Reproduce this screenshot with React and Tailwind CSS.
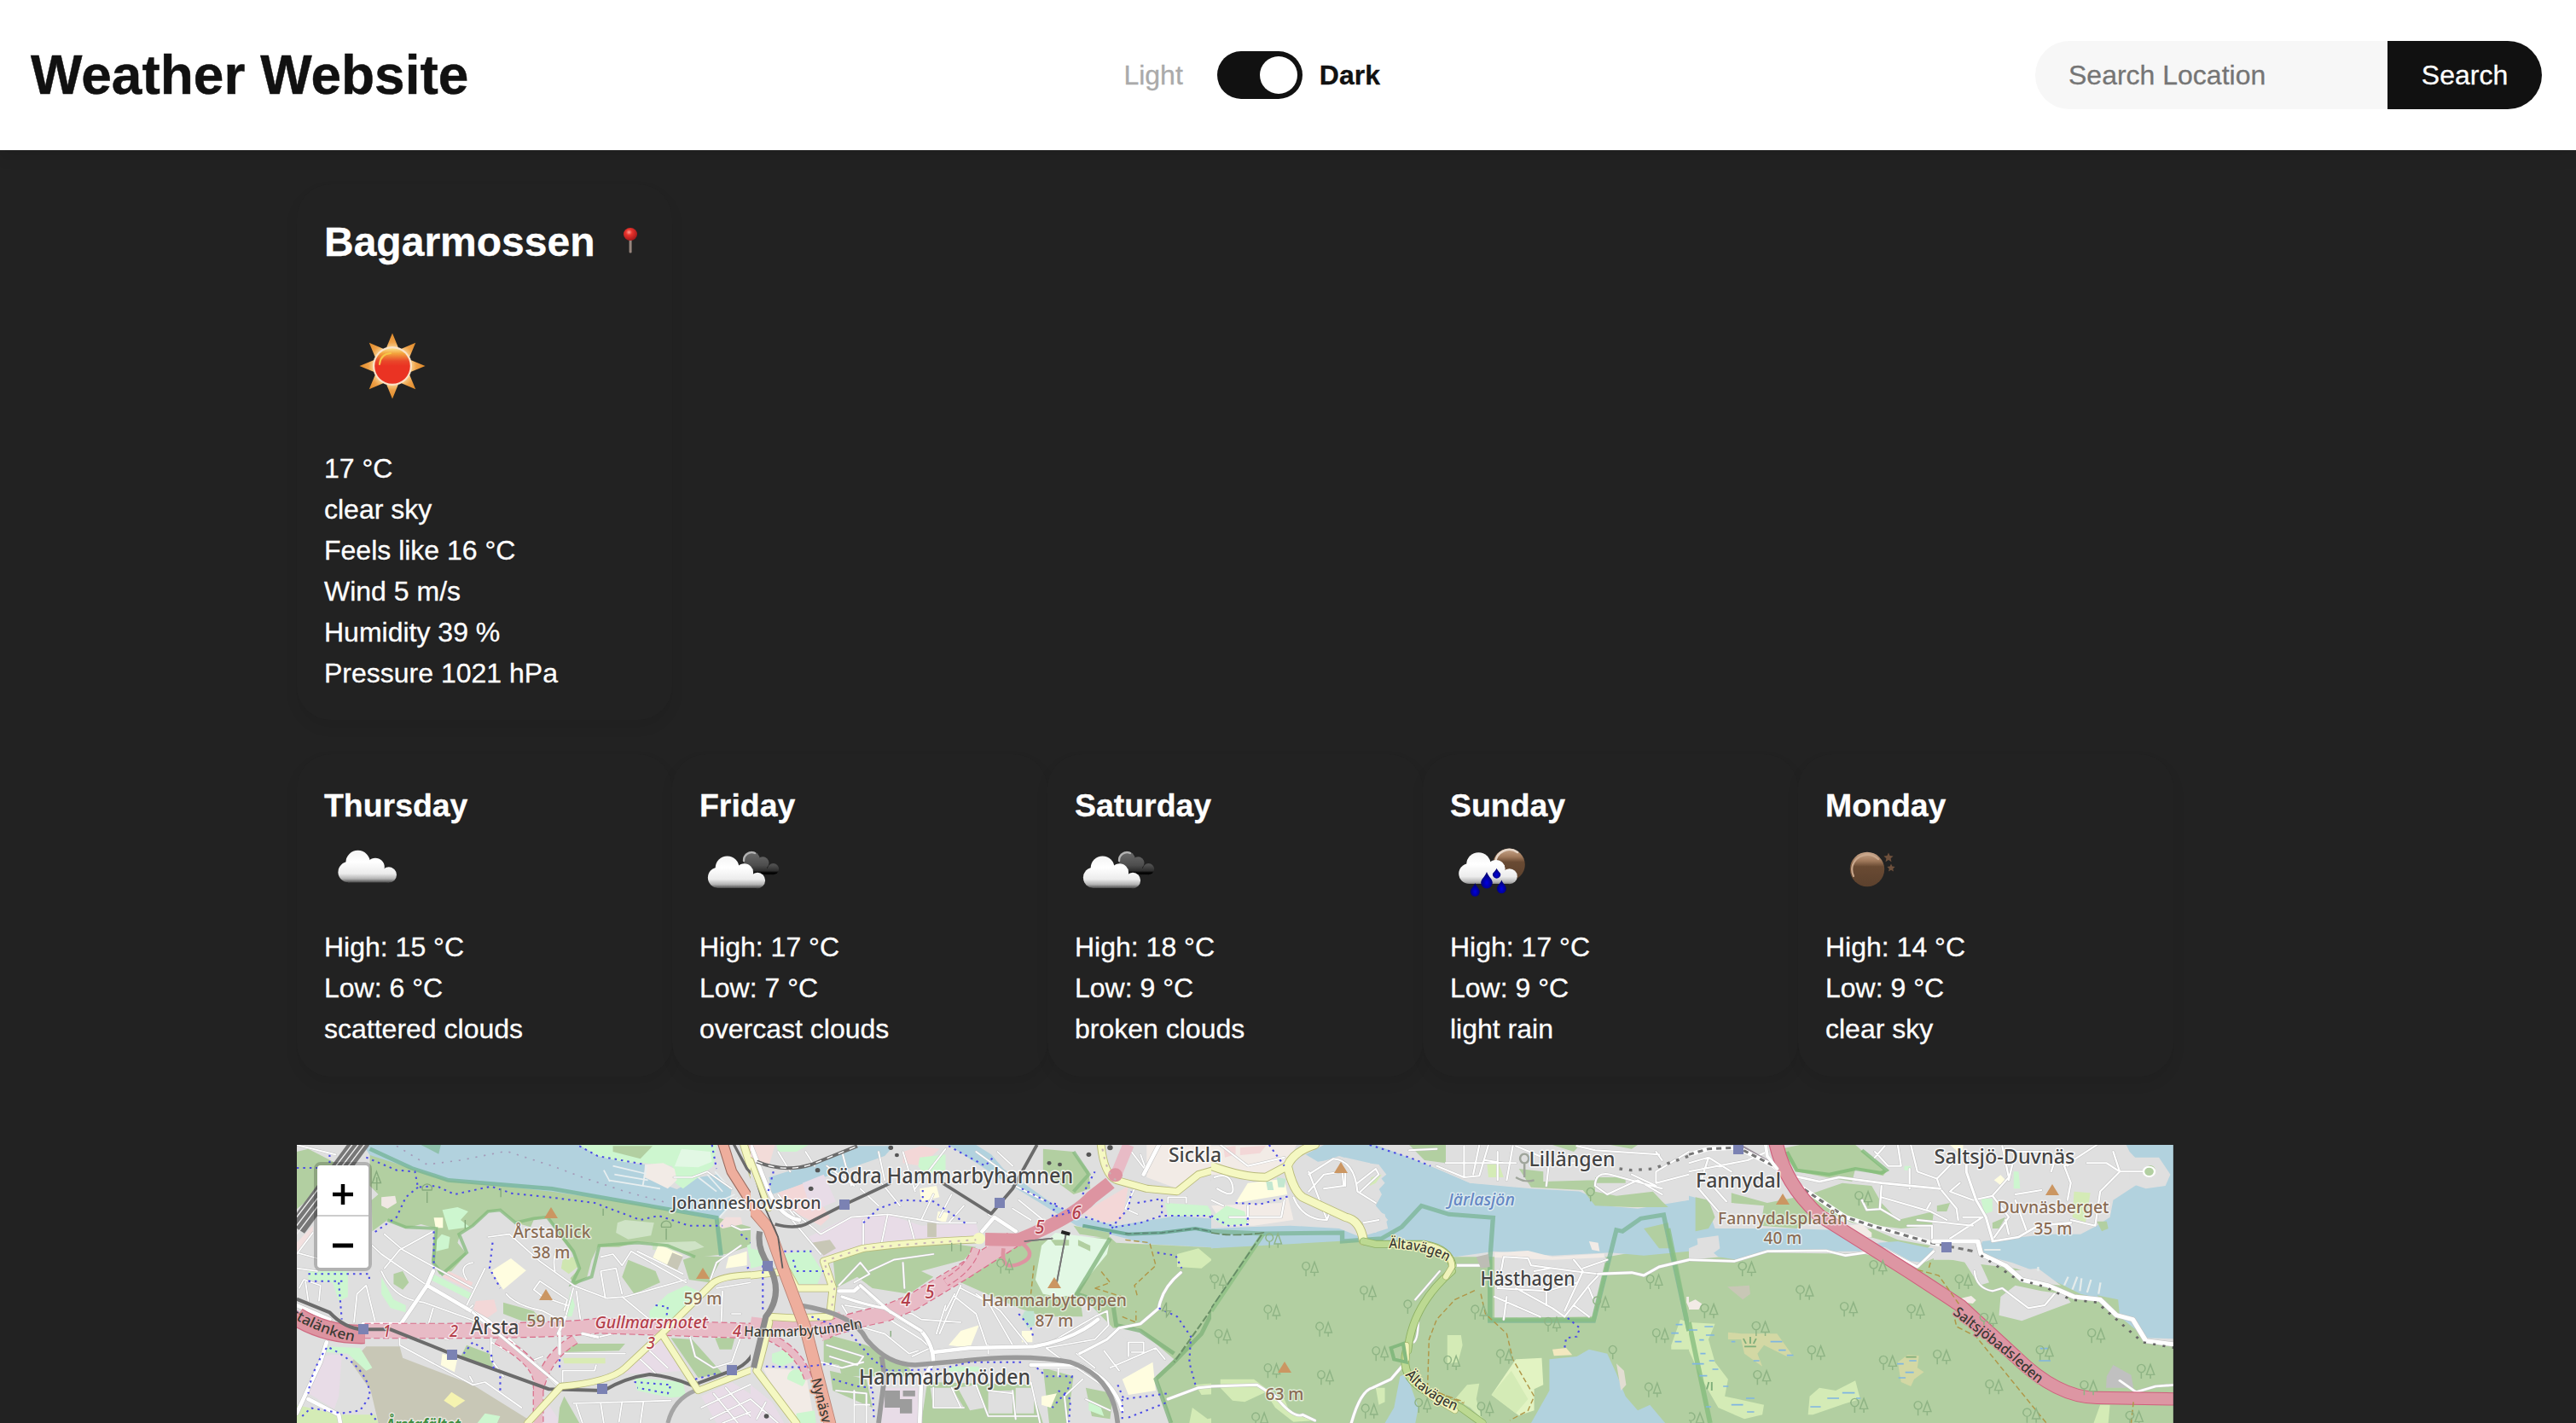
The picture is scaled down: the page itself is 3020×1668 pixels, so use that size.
import React from "react";

/* ---------- Weather icons ---------- */

function CloudShape({ fill, transform }) {
  return (
    <g fill={fill} transform={transform}>
      <circle cx="39.6" cy="45" r="14.2" />
      <circle cx="60" cy="50.5" r="10.8" />
      <circle cx="28.5" cy="56.2" r="12.1" />
      <circle cx="75.8" cy="59.4" r="9.2" />
      <path d="M28 46h42v10h6v12.4H28z" />
    </g>
  );
}

function CloudGradient({ id, y1 = 31, y2 = 68.5 }) {
  return (
    <linearGradient id={id} gradientUnits="userSpaceOnUse" x1="0" y1={y1} x2="0" y2={y2}>
      <stop offset="0" stopColor="#f4f4f4" />
      <stop offset="0.35" stopColor="#ffffff" />
      <stop offset="0.72" stopColor="#ececec" />
      <stop offset="0.88" stopColor="#b4b4b4" />
      <stop offset="1" stopColor="#4a4a4a" />
    </linearGradient>
  );
}

function MoonGradient({ id }) {
  return (
    <linearGradient id={id} x1="0" y1="0" x2="0" y2="1">
      <stop offset="0" stopColor="#c9a78c" />
      <stop offset="0.25" stopColor="#a17a5c" />
      <stop offset="0.42" stopColor="#694a33" />
      <stop offset="1" stopColor="#5c412d" />
    </linearGradient>
  );
}

function ScatteredIcon() {
  return (
    <svg viewBox="0 0 100 100" className="block size-[100px]">
      <defs><CloudGradient id="cloud-a" /></defs>
      <CloudShape fill="url(#cloud-a)" />
    </svg>
  );
}

function BrokenIcon({ id }) {
  return (
    <svg viewBox="0 0 100 100" className="block size-[100px]">
      <defs>
        <CloudGradient id={id} />
        <linearGradient id={id + "-dark"} gradientUnits="userSpaceOnUse" x1="0" y1="31" x2="0" y2="60">
          <stop offset="0" stopColor="#6e6e6e" />
          <stop offset="0.6" stopColor="#4d4d4d" />
          <stop offset="0.82" stopColor="#2e2e2e" />
          <stop offset="0.9" stopColor="#000" />
          <stop offset="1" stopColor="#0d0d0d" />
        </linearGradient>
      </defs>
      <g fill={`url(#${id}-dark)`}>
        <circle cx="61" cy="41.5" r="9.8" />
        <circle cx="74.3" cy="45.5" r="7.2" />
        <circle cx="86.5" cy="52.6" r="6.6" />
        <path d="M55 44h24v8h8v7.2H55z" />
      </g>
      <path d="M52 43a9.3 9.3 0 0 1 13-9" fill="none" stroke="#b4b4b4" strokeWidth="2.4" strokeLinecap="round" />
      <CloudShape fill={`url(#${id})`} transform="translate(-6.2 6.6) scale(.98 1)" />
    </svg>
  );
}

function Drop({ x, y, w, h }) {
  const r = w / 2;
  return (
    <path
      d={`M${x} ${y}C${x + r * 0.3} ${y + h * 0.3} ${x + r} ${y + h * 0.42} ${x + r} ${y + h - r}A${r} ${r} 0 0 1 ${x - r} ${y + h - r}C${x - r} ${y + h * 0.42} ${x - r * 0.3} ${y + h * 0.3} ${x} ${y}Z`}
      fill="url(#drop)"
    />
  );
}

function RainIcon() {
  return (
    <svg viewBox="0 0 100 100" className="block size-[100px]">
      <defs>
        <CloudGradient id="cloud-r" y2={71} />
        <MoonGradient id="moon-r" />
        <radialGradient id="drop" cx=".5" cy=".65" r=".5">
          <stop offset="0" stopColor="#0000e0" />
          <stop offset="1" stopColor="#000078" />
        </radialGradient>
      </defs>
      <circle cx="69" cy="47.5" r="18.8" fill="url(#moon-r)" />
      <path d="M53 45a16.5 16.5 0 0 1 26-12" fill="none" stroke="#e6d6c8" strokeWidth="2.6" strokeLinecap="round" />
      <CloudShape fill="url(#cloud-r)" transform="translate(-6.2 3) scale(1 .98)" />
      <Drop x={54.6} y={51.7} w={9.4} h={12} />
      <Drop x={43} y={56} w={13.6} h={19.6} />
      <Drop x={29.3} y={69} w={11} h={15.8} />
      <Drop x={60.4} y={65.5} w={11} h={15.8} />
    </svg>
  );
}

function NightIcon() {
  return (
    <svg viewBox="0 0 100 100" className="block size-[100px]">
      <defs><MoonGradient id="moon-n" /></defs>
      <circle cx="49" cy="53" r="20.2" fill="url(#moon-n)" />
      <path d="M33 61A18 18 0 0 1 32 48C36 37 51 31 62 41" fill="none" stroke="#c9a78c" strokeWidth="2.2" strokeLinecap="round" />
      <g fill="#6e503c">
        <path d="M74 33.5l1.6 3.6 4 .4-3 2.7.9 4-3.5-2.1-3.5 2.1.9-4-3-2.7 4-.4z" />
        <path d="M77 46.5l1.4 3 3.3.4-2.4 2.3.6 3.3-2.9-1.7-2.9 1.7.6-3.3-2.4-2.3 3.3-.4z" />
      </g>
    </svg>
  );
}

function SunIcon() {
  return (
    <svg viewBox="0 0 160 160" className="block size-[160px]">
      <defs>
        <linearGradient id="sun-core" x1="0" y1="0" x2="0" y2="1">
          <stop offset="0" stopColor="#fbdf8a" />
          <stop offset="0.15" stopColor="#f3a23c" />
          <stop offset="0.36" stopColor="#e9472a" />
          <stop offset="0.5" stopColor="#ea3323" />
          <stop offset="1" stopColor="#ea3323" />
        </linearGradient>
        <radialGradient id="sun-ray" gradientUnits="userSpaceOnUse" cx="80" cy="80" r="39">
          <stop offset="0.6" stopColor="#f5c27a" />
          <stop offset="0.72" stopColor="#eea047" />
          <stop offset="1" stopColor="#dd8726" />
        </radialGradient>
      </defs>
      <g fill="url(#sun-ray)">
        {[0, 45, 90, 135, 180, 225, 270, 315].map((a) => (
          <path key={a} d="M80 41.500L88 61H72Z" transform={`rotate(${a} 80 80)`} />
        ))}
      </g>
      <circle cx="80" cy="80" r="23" fill="#fbe3c8" />
      <circle cx="80" cy="80" r="20.800" fill="url(#sun-core)" />
      <path d="M65 78Q66 66 78 65" fill="none" stroke="#f6c648" strokeWidth="2" strokeLinecap="round" />
    </svg>
  );
}

function PinIcon() {
  return (
    <svg viewBox="0 0 16 32" className="block h-8 w-4">
      <defs>
        <radialGradient id="pin" cx=".4" cy=".35" r=".65">
          <stop offset="0" stopColor="#ff9a8f" />
          <stop offset="0.35" stopColor="#e8332c" />
          <stop offset="1" stopColor="#a3181a" />
        </radialGradient>
      </defs>
      <rect x="6.600" y="13" width="3" height="17.500" rx="1" fill="#96857d" />
      <ellipse cx="8" cy="8.500" rx="8" ry="7.500" fill="url(#pin)" />
    </svg>
  );
}

/* ---------- Map ---------- */

const C = {
  wood: "#b2cfa1", water: "#b2d2de", res: "#dfdfdf", park: "#cdf6cf", pitch: "#fffde0",
  ind: "#e8dce7", retail: "#f3d7d7", heath: "#d4ebb6", brown: "#c8c7b6", sport: "#e2f8e4",
};

const Areas = ({ items }) => items.map(([f, d], i) => <path key={i} d={d} fill={f} />);

function Lines({ d, w = 7, color = "#fff", casing = "#c2c2c2", extra = 3 }) {
  return (
    <g fill="none" strokeLinecap="round" strokeLinejoin="round">
      <path d={d} stroke={casing} strokeWidth={w + extra} />
      <path d={d} stroke={color} strokeWidth={w} />
    </g>
  );
}
const Yellow = ({ d, w = 20 }) => <Lines d={d} w={w} color="#f5f8c2" casing="#b9bb7a" extra={5} />;
const Rail = ({ d, w = 9, color = "#6b6b6b" }) => <path d={d} fill="none" stroke={color} strokeWidth={w} strokeLinejoin="round" />;
const Foot = ({ d }) => <path d={d} fill="none" stroke="#4b4be6" strokeWidth="6" strokeDasharray="7 14" />;
const Track = ({ d }) => <path d={d} fill="none" stroke="#b09647" strokeWidth="4" strokeDasharray="18 10" />;
const Border = ({ d, color = "#86b980", w = 12 }) => <path d={d} fill="none" stroke={color} strokeOpacity=".75" strokeWidth={w} />;
const Tunnel = ({ d, w }) => (
  <g fill="none">
    <path d={d} stroke="#d96f8b" strokeWidth={w} strokeDasharray="20 10" />
    <path d={d} stroke="#e8bbc6" strokeWidth={w - 7} />
  </g>
);

function Trees({ at }) {
  return (
    <g fill="none" stroke="#8fb485" strokeWidth="4">
      {at.map(([x, y], i) => (
        <path key={i} transform={`translate(${x} ${y})`} d="M-14 28V6M-14 6a12 14 0 1 1 .1 0M14 28V14M14-22L2 14H26Z" />
      ))}
    </g>
  );
}

function Marsh({ at }) {
  return <path d={at.map(([x, y, w = 26]) => `M${x} ${y}h${w}`).join("")} stroke="#7fb5e2" strokeWidth="5" fill="none" />;
}

function Tile({ x, width = 560, children }) {
  return (
    <svg x={x} y={-12} width={width} height={338} viewBox="0 0 1568 1014" preserveAspectRatio="none">
      <rect width="1568" height="1014" fill={C.res} />
      {children}
    </svg>
  );
}

function ArstaTile() {
  return (
    <Tile x={-8}>
      <Areas items={[
        [C.wood, "M22 60L60 50 150 100 90 200 22 262Z"],
        [C.wood, "M262 60L520 160 860 190 1400 290 1545 335 1530 385 1430 420 1330 432 1240 385 1140 378 1080 395 1010 395 990 440 975 500 935 532 920 505 950 470 930 420 880 350 845 290 800 300 790 325 740 310 690 265 650 272 600 320 560 345 550 380 580 420 530 480 490 492 465 440 480 330 430 315 380 330 320 300 270 340 268 230 290 210 262 180Z"],
        [C.water, "M240 36H950L1010 75 1090 95 1165 105 1160 150 1270 192 1340 150 1400 140 1450 190 1440 260 1400 300 1150 245 860 200 520 160 262 72Z"],
        ["#8fc1ab", "M430 36H495L488 68Z"],
        [C.park, "M950 36H1400L1390 110 1290 190 1265 170 1255 110 1160 100 1090 95 1010 75Z"],
        [C.wood, "M1060 40H1190L1150 85 1060 60Z"],
        ["#f2ebe6", "M1165 105L1225 100 1262 120 1270 160 1240 190 1165 150Z"],
        [C.sport, "M1285 50L1380 60 1385 95 1340 115 1262 112Z"],
        [C.retail, "M1500 36H1568V170L1540 130Z"],
        ["#f2dfdd", "M1405 320L1430 290 1480 290 1485 315 1420 330Z"],
        ["#cfe3c6", "M1075 310L1100 300 1195 310 1185 355 1110 368 1070 345Z"],
        ["#cfe3c6", "M1190 380L1330 375 1360 395 1310 410 1190 405Z"],
        [C.park, "M500 265L550 255 585 270 560 300 590 325 520 335Z"],
        [C.park, "M480 410L520 400 525 360 498 350 482 370Z"],
        ["#f0e8e4", "M300 220L345 215 350 240 320 260 300 250Z"],
        [C.pitch, "M660 480L725 435 775 478 700 545Z"],
        [C.pitch, "M1210 385L1290 425 1235 465 1190 435Z"],
        [C.pitch, "M472 292h30v36h-24z"],
        [C.brown, "M1255 415L1290 430 1270 480 1235 465Z"],
        [C.pitch, "M1440 430L1500 410 1500 460 1430 470Z"],
        [C.wood, "M1290 440L1330 425 1420 430 1375 520 1310 510Z"],
        [C.wood, "M1090 500L1110 440 1200 480 1215 520 1130 560Z"],
        [C.wood, "M340 490L370 480 390 520 370 545 340 525Z"],
        [C.park, "M300 500L340 580 380 600 380 625 330 610 300 560Z"],
        [C.park, "M470 490L600 560 590 580 460 510Z"],
        [C.retail, "M520 480L600 520 590 545 500 500Z"],
        [C.retail, "M610 585L670 580 680 620 640 650 600 620Z"],
        ["#cfe6b0", "M895 440L930 430 945 465 915 490 890 470Z"],
        [C.wood, "M700 590L800 620 830 660 760 655 700 630Z"],
        [C.park, "M920 550L935 600 925 640 905 640Z"],
        [C.park, "M1180 620L1240 560 1300 530 1360 560 1290 620 1220 690 1180 650Z"],
        [C.park, "M60 480H190V570L160 585 140 520 60 510Z"],
        ["#f2e0df", "M22 380L75 320 75 350 22 420Z"],
        [C.brown, "M250 745L360 745 370 785 600 880 780 1000 770 1014H290L265 900 200 800Z"],
        [C.ind, "M100 790Q120 770 170 775L160 920 145 965 60 910Z"],
        [C.park, "M120 745L230 750 270 820 250 830 190 770 120 765Z"],
        [C.heath, "M22 950L160 985 280 985 290 1014H22Z"],
        [C.wood, "M580 740L665 775 665 825 560 780Z"],
        [C.pitch, "M500 770L550 785 540 835 495 810Z"],
        ["#f5f3b0", "M505 935L530 905 575 935 540 960Z"],
        [C.ind, "M1090 840L1210 710 1280 770 1290 830 1180 840Z"],
        [C.ind, "M850 950L890 1014H790Z"],
        [C.wood, "M900 920L950 1014H880L885 960Z"],
        [C.wood, "M1250 715L1320 720 1420 840 1340 855Z"],
        [C.wood, "M1395 715H1460L1450 755 1410 755Z"],
        [C.wood, "M900 735H1100L1080 760 900 765Z"],
        ["#d9ebb4", "M895 785H1035V805H900Z"],
        [C.park, "M1130 855L1290 870 1300 920 1250 925 1140 900Z"],
        [C.ind, "M1350 920L1450 870 1568 950V1014H1400Z"],
        [C.park, "M615 1014L640 980 690 990 680 1014Z"],
        [C.park, "M1500 390L1540 370 1550 440 1510 450Z"],
      ]} />
      <Border d="M262 50L400 118 520 160 860 190 1400 292 1415 425" color="#72b394" w={14} />
      <Border d="M320 300L380 325 480 330 470 450 500 490 580 415 555 350 600 320 650 270 690 265 740 310 800 295 845 290 930 410 950 470 925 525 990 500 1015 390 1140 380 1240 390 1330 430" color="#84bb7c" w={11} />
      <path d="M1060 110l110 28M1065 140l110 20M1045 160l170 30M1030 125l20 40M1170 110l-12 70M1340 150l60 50M1370 140l50 60M1395 130l50 60M1400 240l60-30M1410 290l60-70" stroke="#e9eff0" strokeWidth="5" fill="none" />
      <path d="M350 40L450 105 560 90 710 58 860 110 960 150 1100 200 1240 240" stroke="#a59ab8" strokeWidth="5" strokeDasharray="6 22" fill="none" />
      <Lines w={5} d="M22 420L75 345M22 415L90 435M22 470L90 480M270 390L300 420 340 450 450 530M310 350L370 405 600 540M310 470L360 405 470 340M600 600L580 620M640 470L580 600M580 510Q550 460 600 450M30 540L45 510 100 530 95 585M50 510L60 585M210 660L220 560 250 530 280 660M300 480Q340 580 440 590L620 660M410 600L355 680M470 610L445 700M445 700L520 720M650 360L720 350 820 445 930 530 1040 575 1100 570 1300 510M800 545L820 515 910 580 900 620M800 545L830 570 910 600M710 560Q740 600 830 620L940 680M930 540L905 640M940 550L960 700 1000 715 1060 700M870 480Q860 430 880 400M1020 430L1060 420 1090 460 1120 410 1300 520M1020 480L1070 470 1090 560M1020 480L1035 575M1090 570L1180 650M1140 410L1290 490M1380 510L1400 450 1480 390M1420 550L1415 670M1400 540L1568 510M1140 690L1410 680M660 660V790L700 850M660 730L780 800 830 780M880 690L885 770 1100 770M895 830H1000L1005 810M895 830V870M360 690V740L600 880 640 870 760 960M590 850L600 870M1310 700L1330 780 1390 820 1450 800 1480 710M1450 630h30M1150 790L1200 840M1180 760L1240 820M930 945L1250 935M960 1014L940 950M1030 1014L1020 945M1080 1010L1090 940M1150 1014L1160 940M1390 910L1470 1014M1430 890L1520 1000M1350 960L1568 850M1380 1000L1568 900M1420 1014L1568 950M1260 150L1320 150 1370 130 1450 190M22 36L150 70M1450 320L1480 335 1530 330" />
      <Lines w={13} d="M355 680L450 530 650 655M450 530L470 480M650 655L885 885M22 980L100 800 120 730M60 930L160 985 165 1014M240 665H355M22 600L130 650" />
      <Tunnel d="M245 690H450Q900 690 1010 672L1568 692" w={56} />
      <Tunnel d="M680 720Q800 790 815 860L815 1014M935 720Q840 780 815 900" w={36} />
      <Lines w={9} d="M600 625L890 885M905 640L880 700M885 695L885 770M960 700L1010 712" />
      <path d="M22 640Q120 705 245 702" stroke="#cf6b82" strokeWidth="68" fill="none" />
      <path d="M22 640Q120 705 245 702" stroke="#dd94a1" strokeWidth="60" fill="none" />
      <Rail d="M22 578L130 625Q180 682 240 685H330L540 775 850 895 1030 900Q1100 855 1180 843 1250 850 1320 882L1450 830Q1530 800 1540 700L1565 560" w={12} />
      <Rail d="M1240 1014Q1260 930 1330 900" color="#a5a5a5" w={14} />
      <Yellow d="M780 1014L890 885Q1050 870 1100 820L1220 700 1390 520Q1430 490 1568 492M1220 700L1340 900 1520 825 1568 870" />
      <Rail d="M235 20L22 330" w={62} color="#777" />
      <path d="M215 20L22 290M235 20L22 320M255 20L22 350" stroke="#eee" strokeWidth="4" fill="none" />
      <Yellow d="M1490 36L1520 140 1568 260" w={22} />
      <Lines d="M1418 20L1450 130 1568 330" w={30} color="#eeae9d" casing="#9a6c60" extra={6} />
      <Rail d="M1455 30L1500 120 1568 200M1568 320Q1520 360 1568 440" />
      <Foot d="M22 117H130V60M250 80L350 125 410 130 420 185 480 180 540 210 660 182 730 207 850 220 1000 240 1150 300 1210 285 1310 320 1420 320M420 185L380 220 350 290 275 345M472 340V470M665 380L655 470 690 540M950 40L1010 75 1165 105M60 490H260V520M60 515H180M160 520L170 650M120 750Q70 830 60 910M130 750Q260 820 262 920L230 970 170 980 60 960M570 770L600 730 660 770 670 830M690 850V910M885 790V830M1130 870L1250 880 1240 910 1140 890M1200 600L1240 605 1235 650M1330 860L1400 840M1385 36L1400 120M1480 350L1520 385M1500 470L1540 450M40 990L70 960M265 980L290 1014" />
      <path d="M285 195V150M450 240V200M692 220V190M1028 285V260M1235 370V330M575 330V300M270 170l14-40 14 40zM435 195a16 16 0 1 1 30 0zM1220 325a16 16 0 1 1 30 0z" stroke="#86aa7d" strokeWidth="4" fill="none" />
    </Tile>
  );
}

function HammarbyTile() {
  return (
    <Tile x={532}>
      <Areas items={[
        ["#f3dcd9", "M0 36H80L60 110 0 90Z"],
        [C.park, "M85 36H190L150 60 90 60Z"],
        [C.water, "M70 210L60 150 180 110 350 40H470L440 75 200 165Z"],
        [C.retail, "M90 205L190 165 260 290 230 320 100 250Z"],
        [C.ind, "M170 170L240 140 280 235 200 270Z"],
        [C.ind, "M190 360L320 290 450 280 560 320 740 310 750 355 540 370 330 400 240 430Z"],
        [C.brown, "M200 380L260 370 280 400 240 425Z"],
        [C.brown, "M580 310h30v50h-30z"],
        [C.retail, "M500 60L560 40 620 50 560 110 500 100Z"],
        [C.park, "M555 80L640 70 640 125 570 140 550 110Z"],
        [C.water, "M650 36H740L790 70 830 120 1000 250 1080 290 1200 320 1400 285 1568 300V400L1300 385 1180 350 1070 320 950 240 820 155Z"],
        [C.wood, "M960 50L1060 60 1110 130 1115 190 1060 210 960 130Z"],
        [C.wood, "M1060 320L1180 345 1175 365 1080 350Z"],
        [C.retail, "M1090 275L1240 180 1220 300 1160 310Z"],
        [C.park, "M1360 240L1500 250 1520 285 1370 285Z"],
        ["#f2ebe6", "M1300 36H1568V110L1400 190 1300 150Z"],
        [C.wood, "M270 430L400 400 640 380 740 395 700 440 560 480 600 500 520 560 400 540 350 500 280 540Z"],
        [C.wood, "M690 520L870 380 960 370 1180 360 1200 380 1568 400V1014H1380L1330 850 1390 790 1270 680 1190 680 1080 560 1090 640 960 640 880 610Z"],
        [C.sport, "M1000 345L1180 370 1170 420 1060 565 1010 570 960 560 935 510 955 390Z"],
        [C.wood, "M985 370h60v20h-45zM1075 370l40 20 0 20-40-20z"],
        [C.heath, "M1400 420L1470 400 1515 440 1480 470 1400 465Z"],
        [C.park, "M110 420L190 405 235 480 220 525 150 525Z"],
        [C.park, "M0 400L40 410 40 460 0 470Z"],
        ["#fffde0", "M555 190L610 180 620 220 560 235ZM615 270l35 5-10 35-30-10zM690 690l60-20-30 80-70-10zM890 690h35v40h-35z"],
        ["#bfe3d0", "M900 620l30 0 5 50-25 10-20-40z"],
        [C.wood, "M240 700L380 740 520 820 540 850 300 850 290 810 240 800Z"],
        [C.wood, "M260 830L380 860 400 960 270 900Z"],
        [C.wood, "M580 870L920 880 960 1014H560Z"],
        [C.res, "M590 890L660 890 700 960 600 960ZM680 890L740 880 770 960 720 970ZM780 900h80v80h-80zM870 890h60v90h-60z"],
        ["#f2ebe6", "M40 820L180 830 210 1014H130Z"],
        [C.park, "M70 770L130 750 160 790 100 815 70 800ZM150 980L210 970 215 1014H150ZM120 860a30 34 0 1 1 50 25z"],
        [C.ind, "M0 880L70 940 110 1014H0Z"],
        [C.res, "M1030 790L1200 700 1330 760 1360 800 1330 850 1230 1014H960L940 860Z"],
        [C.wood, "M960 820L1060 850 1040 1014H980ZM1100 890l90 20-10 90-60-10z"],
        [C.pitch, "M1220 860L1320 800 1330 900 1240 915ZM955 920l50-10-20 50-30-10z"],
        [C.park, "M1110 940l40 20 10 30-50-20zM650 815h100v18H650z"],
        [C.ind, "M430 890H550V1014H430Z"],
        ["#9c9c9c", "M440 900h50v30h40v50h-40v-20h-50zM500 900h40v20h-40z"],
        [C.heath, "M1450 960L1500 1000 1568 985V1014H1440ZM1460 880L1568 870V910L1480 915Z"],
      ]} />
      <Border d="M1568 510L1480 700 1390 800 1330 860 1380 1014M1180 365L1070 560 1190 600 1200 670 1280 690 1390 770" color="#7eb27a" w={14} />
      <Border d="M1060 60L1110 140 1060 200" />
      <Lines w={5} d="M90 60L130 130M180 60L210 110M300 60L330 180M340 180L250 110M420 60L440 160M500 60L540 200M360 190L420 250M430 170L490 250M540 190L640 50M600 210L560 300M660 210L620 290M700 250L650 310M740 60L870 160M810 60L860 110M850 170L960 230M860 260L920 300M880 230L960 300M780 280L870 340M120 280L230 420M140 270L230 350 330 290 450 280 620 310 740 310M370 300V390M450 280L430 380M520 300L540 380M90 210L160 310M1250 60L1300 130 1280 70M1568 150Q1500 130 1520 180L1568 220M1370 240V220H1430V240M1260 190L1230 260 1270 280M500 450L505 540M290 530L360 450 390 490 340 520M390 480L470 440 600 420M300 600L340 670 440 700 520 770 550 760M310 600L420 620 470 660 560 720 590 750 530 780M460 620L530 630 560 650 690 660M640 600L610 700M690 530L620 700M670 560L640 620M690 540L780 590 860 740M670 570L740 630 775 740M740 560L820 620 910 740M780 740V770M680 830M970 740L1130 640 1170 620 1175 670 1130 720 970 750M970 750L1020 790M1070 770L1130 820M1160 760L1210 830M1180 820L1330 750 1360 790M1240 780V730H1290V765H1250M250 740L370 780 350 810 260 780M230 800L300 820 370 800M430 840L440 870M280 900L380 910V1014M340 900V1014M340 950H390M560 890V1014M600 890V960L700 960M660 890L690 960M740 880L780 990 940 990M780 900L860 910M920 870L950 1014M860 900L870 1000M940 820H1070L1180 900M1010 820V850M1090 860L1030 920 1040 1014M1100 930L1180 970M0 930L90 1014M50 940L20 1000" />
      <Lines w={13} d="M290 550H340L360 530 450 620 560 690Q600 740 600 800M600 765L720 750 930 745Q1060 720 1140 650M760 340L800 290 870 340M600 800L560 870 555 1014M920 810L1080 810Q1190 860 1220 970M1340 36L1290 140M0 36L60 200Q100 290 160 300" />
      <Lines w={9} d="M1412 485Q1350 540 1340 610L1280 665 1210 680 1170 720 1080 770M1370 930L1470 890 1568 880" />
      <path d="M0 660Q200 690 300 640" stroke="#e8bbc6" strokeWidth="40" fill="none" />
      <Tunnel d="M240 690Q340 650 440 630L530 590 700 480 860 370" w={60} />
      <Tunnel d="M60 710Q160 760 190 860M740 400Q720 470 640 520M240 690L250 720" w={30} />
      <Lines w={10} d="M300 570Q380 600 440 610L560 690M360 530L460 625" />
      <path d="M770 368L880 370Q1060 290 1120 220L1180 170" stroke="#dd94a1" strokeWidth="46" fill="none" />
      <path d="M800 375Q860 350 900 390T880 455 830 400" stroke="#dd94a1" strokeWidth="13" fill="none" />
      <path d="M1200 140L1240 36" stroke="#e8bbc6" strokeWidth="38" fill="none" />
      <Yellow d="M240 445L370 400Q500 380 750 368M240 445L270 540 260 640 140 645 60 640M150 540H270M0 495L120 480 150 540M1150 36Q1160 140 1200 160L1300 190 1400 200 1470 140 1568 110M60 660Q40 760 20 830L150 1014" w={22} />
      <circle cx="1197" cy="142" r="24" fill="#dd94a1" />
      <circle cx="750" cy="365" r="20" fill="#f5f8c2" />
      <path d="M240 445L370 400Q500 385 740 370M245 460L275 540 265 620M1155 50Q1170 140 1200 160" fill="none" stroke="#c7b4b4" strokeWidth="6" strokeDasharray="8 20" />
      <Rail d="M20 95Q110 135 200 105L350 40" w={12} />
      <path d="M20 95Q110 135 200 105L350 40" fill="none" stroke="#fff" strokeWidth="4" strokeDasharray="20 20" />
      <Rail d="M80 315Q150 335 190 310L310 245 460 170M630 170L790 278 860 190 940 36" w={11} />
      <Rail d="M160 600Q340 630 380 720 450 810 540 810L700 795Q900 770 1050 800 1190 850 1205 1014M430 780L440 850 420 1014" color="#9a9a9a" w={16} />
      <Rail d="M30 340Q20 400 60 460Q110 560 50 640L10 820" w={20} color="#8b8b8b" />
      <Lines d="M-20 230L60 330 110 480 180 680 260 1014" w={36} color="#eeae9d" casing="#b98375" extra={5} />
      <path d="M0 100L40 240 90 360 105 470" stroke="#5c5c5c" strokeWidth="5" fill="none" />
      <Yellow d="M0 90L60 260" w={16} />
      <Lines w={5} color="#777" casing="#777" extra={0} d="M1035 350L1005 520M900 375L990 365" />
      <path d="M1020 342l28 8" stroke="#222" strokeWidth="12" />
      <path d="M1090 320L1240 350 1350 345 1460 330 1568 352" stroke="#5fa386" strokeWidth="12" strokeOpacity=".8" fill="none" />
      <path d="M1230 348L1350 345 1460 330 1568 352" stroke="#5b8072" strokeWidth="4" strokeDasharray="20 8" fill="none" />
      <path d="M1568 530L1390 800" stroke="#6c9168" strokeWidth="6" strokeDasharray="24 8" fill="none" />
      <Foot d="M75 130L55 210M370 310L420 260 500 230 600 235 710 315M565 195V235M650 40L770 110 800 75M890 190L1000 250 1100 290 1200 325 1280 310 1350 285 1500 285 1568 320M1000 240L990 290 1060 270M1090 210L1130 130M1180 350L1190 320 1240 260 1250 200M1270 240L1350 225V290M110 410L200 410M140 440L150 480H240M40 460V620M200 640L320 690 400 790 450 830 620 825 720 800 900 800M50 815L160 818 270 805M270 860L350 885 400 890 405 1000M880 630L920 680 930 720M940 820L970 850 1055 850 1040 900 990 960M1010 900L1050 930 1045 1010M1335 415L1395 425 1415 470M1340 610L1400 640 1445 710 1440 800 1460 880M1205 880L1225 930 1370 910M1240 995L1370 940M1220 930V1000" />
      <Track d="M1230 370L1310 380 1330 460 1260 530 1270 570M1130 540L1180 520 1150 480M1130 540L1220 570M1220 640L1265 660V620M930 460L920 560" />
      <Trees at={[[835, 460], [1535, 508], [1550, 700]]} />
      <path d="M690 410V380M660 410V380M460 710V690M1365 640V590l-14 30h28z" stroke="#8aad81" strokeWidth="4" fill="none" />
      <g fill="#555"><circle cx="220" cy="125" r="8" /><circle cx="198" cy="190" r="8" /><circle cx="460" cy="46" r="8" /><circle cx="480" cy="72" r="7" /><circle cx="980" cy="100" r="7" /><circle cx="1015" cy="105" r="7" /><circle cx="1180" cy="46" r="9" /><circle cx="1110" cy="70" r="8" /><circle cx="52" cy="990" r="8" /></g>
    </Tile>
  );
}

function NackaTile() {
  return (
    <Tile x={1072}>
      <Areas items={[
        [C.wood, "M0 400L300 365 480 370 560 370 790 430 930 430 1300 430 1568 380V1014H0Z"],
        [C.water, "M310 70L370 36H550L720 110 850 170 1050 190 1220 200 1290 250 1400 260 1568 230V410L1420 425 1310 415 1120 425 930 410 800 430 740 390 500 370 0 400V330L120 325 260 320 420 330 490 360 580 330 570 280 500 250 570 170 520 100 440 80 350 95Z"],
        [C.res, "M320 110L420 75 480 95 550 105 575 140 540 170 560 210 540 250 580 300 540 345 500 330 470 300 360 300 320 200Z"],
        ["#f2ebe6", "M0 40L280 36 250 110 170 150 0 140Z"],
        [C.retail, "M40 45L80 40V70L45 80ZM95 45L180 38 160 65 95 72Z"],
        [C.pitch, "M120 170L240 155 250 210 80 240Z"],
        ["#c3e7d0", "M215 150l30 5-5 30-20 0zM180 165l20 0 5 30-20 0z"],
        ["#f2ebe6", "M0 250L230 240 250 210 270 300 140 320 40 320Z"],
        [C.park, "M0 290L50 250 110 270 120 315 40 320Z"],
        [C.res, "M540 36H1568V230L1480 240 1370 250 1250 220 1190 190 1050 185 850 170 720 110Z"],
        [C.wood, "M650 36H770V100L700 90ZM1010 120L1090 130 1090 165 1260 160 1260 200 1330 215 1450 200 1480 235 1500 255 1380 255 1260 250 1220 195 1050 185ZM1120 36H1210L1190 60ZM1260 150h100v20h-100zM1310 36H1400L1380 50Z"],
        [C.heath, "M905 100L940 90 960 150 910 150ZM525 150l35-10-20 30-20 10z"],
        [C.res, "M930 430L1000 410 1120 430 1290 425 1300 440 1255 640 930 645Z"],
        ["#f2ebe6", "M930 415L1040 408 1120 430 1290 418 1290 432 1120 440 930 432ZM1240 375l30 5 5 30-25-5zM1560 570h8v40l-8-20z"],
        [C.wood, "M1420 330L1500 310 1510 400 1470 400Z"],
        [C.water, "M1110 790L1200 780 1240 755 1300 770 1330 840 1360 920 1400 970 1440 950 1490 1014H1050L1110 900Z"],
        ["#e2ddd2", "M1330 805L1355 830 1362 880 1345 900Z"],
        ["#f2e8bf", "M1120 755L1165 750 1185 775 1125 778Z"],
        [C.water, "M620 850L640 840 680 960 670 1014H570L600 960Z"],
        [C.heath, "M775 705L820 705 825 740 810 800 775 805ZM800 930L840 880 880 875 870 930 890 1000 850 960ZM30 860L140 860 190 900 110 940 70 935 30 890ZM540 890h30l0 50-20 10zM175 900L240 930 260 980 340 1005 270 1010 210 960ZM1510 740L1540 650 1568 660V755H1510Z"],
        ["#e2f3c2", "M920 915L1000 790 1085 785 1090 880 1060 895 1060 970 1010 988Z"],
        [C.heath, "M920 915L985 830 1040 930 1000 980Z"],
      ]} />
      <Border d="M0 340L170 348 430 345V375L560 365 625 325 690 250 780 280 925 292 915 440V655H1255L1330 335 1350 340 1410 295 1485 282 1568 690" color="#79b494" w={15} />
      <Border d="M170 350L0 620M915 440V650H1255L1300 450M1500 330L1568 690" color="#8abf82" w={15} />
      <path d="M0 345Q70 360 170 345L0 610" stroke="#668a66" strokeWidth="5" strokeDasharray="28 8" fill="none" />
      <Lines w={6} d="M30 36L120 110 240 80M320 140L400 85Q470 90 480 200L540 240M320 200L370 140 430 130 435 180 370 190M440 180V135M320 130L380 300M270 220Q300 300 380 300L390 270M480 170L540 120 550 140 490 200M500 310L550 300M10 150Q60 130 70 180T20 190M60 290H230L240 230M120 250V300M0 230L40 250M650 55L740 50M740 110L830 150 880 145 910 36M830 40V150M770 100H1000M940 60V160M990 40L970 160M900 90L960 100M880 36L860 140M1000 40L1110 90 1100 180M1110 100H1200M1200 40L1260 55 1470 70M1260 180Q1260 130 1310 140L1480 190M1260 180L1300 210 1400 160 1480 210M1380 140L1460 180M1460 60L1480 90M1460 130L1568 60M1460 130V170L1568 140M950 490L960 430 1040 435 1050 460 1190 480 1270 490M1060 480L1110 470M1100 540V600M930 570L1080 640M1000 540L1120 610 1160 640 1240 530 1275 490M970 570L960 650M1190 600L1240 640M1240 540L1255 580M1160 620L1220 480 1190 440M940 540L1100 550 1200 520M1220 470L1300 440" />
      <Lines w={9} d="M1270 490L1380 485 1420 495 1470 465 1568 440M0 885L150 880 210 920Q270 1000 300 985L340 1005M460 1014Q490 900 530 890L590 860 630 810M800 460H880" />
      <Lines w={6} d="M750 480L670 580M680 640Q680 720 665 730" />
      <Yellow d="M340 36Q270 60 250 110L180 150Q100 150 0 110M250 110Q270 200 300 220L440 290Q490 300 500 375" w={26} />
      <Lines d="M500 375L540 385 700 385Q780 400 792 460M640 760Q620 850 700 900L820 960 890 1014M790 480Q660 600 645 760" w={22} color="#bcd992" casing="#8db064" extra={5} />
      <Lines d="M600 388L700 385Q790 405 790 465L770 500M640 740V790M660 860L720 920 800 970" w={18} color="#f0f3bb" casing="#a5b56a" extra={4} />
      <path d="M590 750L630 735 640 800 600 790Z" fill="none" stroke="#84b97e" strokeWidth="12" />
      <Foot d="M190 36L240 110M520 36L650 80 720 110M0 285L60 322 120 315V290M80 240L160 245 260 215M1170 645L1210 680 1200 710 1165 715 1160 750" />
      <path d="M1340 120L1380 125 1450 120 1568 75" stroke="#777" strokeWidth="10" strokeDasharray="10 22" fill="none" />
      <Track d="M865 548L800 580 740 650 715 720 710 890 830 945M885 560L900 630 970 700 990 790 1060 920 1040 970 980 1005M750 910L830 940" />
      <Marsh at={[[1525, 668, 22], [1510, 698, 24], [1522, 728, 22]]} />
      <Trees at={[[325, 470], [515, 555], [370, 682], [38, 708], [25, 515], [375, 852], [520, 970], [160, 1000], [880, 622], [963, 778], [790, 800], [900, 963], [1455, 515], [1280, 592], [1475, 705], [1450, 895], [695, 950], [200, 622], [555, 768], [200, 828], [1120, 665], [205, 370]]} />
      <path d="M645 610a12 14 0 1 1 .1 0v20M1318 770a12 14 0 1 1 .1 0v20M1245 215a12 14 0 1 1 .1 0v20" stroke="#8fb485" strokeWidth="4" fill="none" />
      <path d="M870 430l40-10 5 45-30 5z" fill="#bdbdb5" />
      <path d="M1000 150q30 20 60 10M1028 100a14 16 0 1 1 .1 0v50" fill="none" stroke="#9fa59b" strokeWidth="7" />
    </Tile>
  );
}

function DuvnasTile() {
  return (
    <Tile x={1632} width={600}>
      <Areas items={[
        [C.wood, "M0 440L240 415 540 420 700 460 760 430 850 450 1000 470 1280 570 1360 640 1400 720 1568 750V1014H0Z"],
        [C.water, "M0 215L50 230 80 330 300 330 440 335 560 380 750 400 720 450 680 445 600 395 520 410 260 410 150 440 90 430 40 380 0 400Z"],
        [C.wood, "M20 220L60 230 80 290 60 330 20 340ZM130 205L240 240 330 220 400 290 330 330 220 320 230 250 130 240Z"],
        [C.wood, "M280 50L340 36H510L605 130 595 145 510 120 500 165 420 150 330 130Z"],
        [C.wood, "M370 210L470 170 560 180 590 240 640 300 750 270 745 320 650 330 500 310 400 260ZM760 250l40-10-10 30-30 0zM930 310l40-20-20 40-20 0z"],
        [C.wood, "M490 340L560 330 640 370 740 390 720 410 620 380Z"],
        [C.water, "M580 380L640 375 740 400 720 440 680 445Z"],
        [C.water, "M890 400L900 375 1100 350 1200 350 1250 320 1290 290 1300 230 1380 170 1400 120 1350 60 1340 36H1568V720L1400 715 1320 640 1310 590 1200 560 1060 480 990 450 890 420Z"],
        [C.res, "M1350 80L1440 80 1475 140 1460 180 1400 190 1350 170Z"],
        [C.wood, "M1250 565L1315 580 1320 640 1280 600ZM1250 305l30 0 5 25-20 10zM1400 120a14 16 0 1 1 28 10z"],
        [C.heath, "M1180 200L1230 205 1215 310 1175 290Z"],
        [C.park, "M895 225L930 225 930 270 905 280ZM995 130l15 0 5 60-20 0zM660 110l20 0 0 15-20 0z"],
        [C.pitch, "M935 160l20-18 15 18-15 18zM800 36h40l0 20-20 0z"],
        [C.res, "M750 410L880 420 920 520 890 530 840 440 750 440Z"],
        [C.res, "M955 570L1000 530 1080 550 1150 560 1170 590 1100 620 1020 655 950 635Z"],
        [C.res, "M980 480L1070 470 1140 530 1060 520Z"],
        ["#f2ebe6", "M480 320l50-5 30 30 0 15-40 0zM835 575l30-8 15 15-10 12-35-5zM0 590l20-10 20 15-10 20-30 0z"],
        [C.brown, "M118 535L185 530 188 560 165 580Z"],
        [C.res, "M25 365L90 355 95 400 60 430 30 415Z"],
        [C.heath, "M0 660L80 665 60 720 80 800 120 860 110 920 230 950 225 985 170 1000 90 960 40 860 0 760Z"],
        [C.heath, "M365 985L370 920 400 890 450 900 510 865 525 930 480 945 380 985ZM1240 1014L1260 950H1290L1285 1014Z"],
        ["#d3d8a4", "M120 695L160 700 270 700 320 780 300 780 230 740 210 770 225 815 170 770 160 720 120 720ZM640 800L670 775 705 778 700 820 720 835 690 860 680 885 650 870Z"],
        ["#c0c0c0", "M1278 890L1280 850 1300 810 1355 845 1362 890Z"],
      ]} />
      <Border d="M300 60L330 125 430 140 510 120 590 135 605 125 530 55" color="#7cba74" w={12} />
      <Lines w={6} d="M0 100L60 80 130 130M60 80L30 190 90 270M0 130L180 90 240 60M80 190L115 235M570 80L600 40M570 60L610 110H650L640 36M680 36L700 130 760 155M676 120V190M590 180L585 260 645 300M530 230L545 265 585 262M590 220L740 270 790 300M760 155L840 60M760 155L770 190 820 260 825 300M800 200L870 230 930 215 980 150 960 40M980 160L1000 60 1100 60M1110 130L1130 60M800 200L830 170M930 215L980 290 930 370M1000 210L1080 195M1000 230L1035 340M970 300L980 350M1250 36L1150 110 1170 170 1160 230M1220 100H1280L1320 130H1400M1300 60L1320 130 1260 200 1245 320 1170 300M1160 110L1180 90M670 320H745V370M800 365L900 290 840 290M740 240L730 260M700 300L870 320M875 480Q880 540 930 550L960 540 1000 575 1040 610 1090 600 1120 560" />
      <circle cx="1410" cy="130" r="17" fill={C.wood} stroke="#fff" strokeWidth="6" />
      <Lines w={8} d="M320 145L400 165 460 150 590 170 770 190M850 60V130L880 230 910 290 930 370M0 440L140 445 240 410 420 408 480 425 600 405 700 465 750 410M1320 865L1370 905 1430 885 1490 880M930 375L1010 360 1070 320 1170 310" />
      <Rail d="M150 36L270 115" color="#9a8f9a" w={14} />
      <path d="M0 70L60 50 150 45 260 110 350 190 480 290 560 320 740 380 790 390" stroke="#fff" strokeWidth="15" fill="none" />
      <path d="M0 70L60 50 150 45 260 110 350 190 480 290 560 320 740 380 880 412" stroke="#777" strokeWidth="9" strokeDasharray="16 13" fill="none" />
      <Lines w={15} d="M750 375H885L895 420 970 460 1020 510 1100 530 1180 570 1260 580 1310 635 1360 650 1400 725 1490 738" />
      <path d="M895 425L1000 505 1090 535 1170 580 1250 590 1310 650 1390 730 1490 750" stroke="#666" strokeWidth="8" strokeDasharray="8 22" fill="none" />
      <path d="M1150 530l12-30M1175 545l15-45M1198 550l5-45M1220 555l12-45M1255 560l6-40M905 405h50M1070 480v-15" stroke="#e5eceb" strokeWidth="6" />
      <path d="M265 20Q290 170 400 285L560 400Q700 500 830 600L1000 780Q1130 925 1250 925L1500 930" stroke="#cf5f7c" strokeWidth="46" fill="none" />
      <path d="M265 20Q290 170 400 285L560 400Q700 500 830 600L1000 780Q1130 925 1250 925L1500 930" stroke="#dd96a3" strokeWidth="40" fill="none" />
      <Lines w={10} d="M235 36L240 75 270 120" extra={2} />
      <Track d="M740 450L735 470M700 475L765 495 830 600M815 650L820 675 880 710 1000 880 1095 1014M1362 940L1355 1014" />
      <Border d="M0 660L65 1014" color="#82bb7b" w={15} />
      <Marsh at={[[0, 687], [48, 675], [52, 705], [32, 722, 14], [35, 770, 16], [62, 795, 16], [10, 806, 36], [72, 825, 18], [32, 848, 24], [105, 885, 16], [175, 927], [130, 950, 36], [178, 975, 22], [250, 728, 36], [275, 758, 22], [300, 776, 20], [130, 728, 12], [198, 795, 18], [470, 908, 38], [424, 927, 36], [372, 957, 32], [512, 927, 14], [675, 795, 22], [638, 806, 20], [663, 836], [642, 855, 22], [1076, 752, 26], [1072, 795, 36], [52, 957, 16]]} />
      <path d="M170 745h36M175 735l-8-18M188 735v-24M198 735l8-18M55 895l6-25M70 900v-30M665 782h32" stroke="#7fae7a" strokeWidth="5" />
      <Trees at={[[178, 470], [355, 553], [490, 612], [695, 620], [220, 680], [224, 852], [610, 800], [775, 780], [935, 885], [716, 960], [1248, 705], [1050, 985], [842, 515], [1365, 995], [20, 1000], [62, 618], [390, 765], [1400, 830], [522, 950], [1090, 765], [580, 465], [918, 650], [535, 222], [1225, 888]]} />
      <rect x="1484" y="0" width="84" height="1014" fill="#222" />
    </Tile>
  );
}

const peaks = [[298, 80], [292, 176], [476, 151], [888, 162], [1224, 27], [1158, 261], [1742, 64], [2058, 53]];
const stations = [[78, 216], [182, 246], [358, 286], [510, 264], [642, 70], [824, 68], [552, 142], [1690, 5], [1934, 120]];

/* text, centre x, baseline y, width, font size, kind */
const labels = [
  ["Årstablick", 299, 108.7, 91, 19.5, "peak"],
  ["38 m", 298, 133, 45, 19.5, "peak"],
  ["59 m", 476, 187, 45, 19.5, "peak"],
  ["59 m", 292, 213, 45, 19.5, "peak"],
  ["Årsta", 232, 222, 57, 24, "place"],
  ["Gullmarsmotet", 415.6, 215, 132, 20, "exit"],
  ["1", 105.6, 225, 9, 20, "exit"],
  ["2", 184, 225, 10, 20, "exit"],
  ["3", 415, 239, 10, 20, "exit"],
  ["4", 516, 225, 10, 20, "exit"],
  ["Johanneshovsbron", 527, 75, 175, 20.5, "place"],
  ["Årstafältet", 148, 335, 88, 20, "park"],
  ["Södra Hammarbyhamnen", 765.6, 45, 289, 24.5, "place"],
  ["Sickla", 1053, 20, 62, 24, "place"],
  ["5", 871, 104, 11, 22, "exit"],
  ["6", 914, 87, 11, 22, "exit"],
  ["5", 742, 180, 11, 22, "exit"],
  ["4", 714, 189, 11, 22, "exit"],
  ["Hammarbytoppen", 888, 189, 170, 19.5, "peak"],
  ["87 m", 888, 213, 45, 19.5, "peak"],
  ["Hammarbyhöjden", 759.5, 281, 201, 24.5, "place"],
  ["Lillängen", 1495, 25, 101, 24, "place"],
  ["Järlasjön", 1389, 71, 78, 19, "lake"],
  ["Hästhagen", 1443, 165, 111, 24, "place"],
  ["63 m", 1158, 299, 45, 19.5, "peak"],
  ["Fannydal", 1690, 50, 100, 24, "place"],
  ["Saltsjö-Duvnäs", 2002, 22, 165, 24, "place"],
  ["Fannydalsplatån", 1742, 93, 152, 19.5, "peak"],
  ["40 m", 1742, 116, 45, 19.5, "peak"],
  ["Duvnäsberget", 2059, 80, 131, 19.5, "peak"],
  ["35 m", 2059, 105, 45, 19.5, "peak"],
];

const kinds = {
  place: "fill-[#444] stroke-white/80 font-medium",
  peak: "fill-[#8a6c54] stroke-white/60 font-medium",
  exit: "fill-[#b43f4b] stroke-white/70 font-medium italic",
  park: "fill-[#3f8f43] stroke-white/60 font-bold italic",
  lake: "fill-[#6587c4] stroke-white/50 font-medium italic",
};

const roadNames = [
  ["ltv1", "M1280 121Q1325 122 1350 138", "Ältavägen", 71, "stroke-[#f2f4c0]"],
  ["ltv2", "M1299 270Q1322 297 1361 313", "Ältavägen", 73, "stroke-[#f2f4c0]"],
  ["sbl", "M1941 198L2011 253Q2028 270 2042 280", "Saltsjöbadsleden", 130, "stroke-[#dd96a3]"],
  ["hbt", "M524 224Q600 228 666 214", "Hammarbytunneln", 140, "stroke-white/50"],
  ["nyn", "M603 275L616 326 630 390", "Nynäsvägen", 90, "stroke-[#eeae9d]"],
  ["arl", "M-24 190Q20 222 70 231", "Årstalänken", 100, "stroke-[#dd94a1]"],
];

function MapCanvas() {
  return (
    <svg viewBox="0 0 2200 326" width="2200" height="326" className="block font-['Noto_Sans',sans-serif]">
      <ArstaTile />
      <HammarbyTile />
      <NackaTile />
      <DuvnasTile />
      {stations.map(([x, y], i) => (
        <rect key={i} x={x - 6} y={y - 6} width="12" height="12" fill="#7b82b3" />
      ))}
      {peaks.map(([x, y], i) => (
        <path key={i} d={`M${x} ${y - 7}l8 13h-16z`} fill="#cb9662" />
      ))}
      {roadNames.map(([id, d, text, len, halo]) => (
        <g key={id}>
          <path id={id} d={d} fill="none" />
          <text fontSize="16.5" strokeWidth="2.500" className={"fill-[#3a3a33] font-medium [paint-order:stroke] " + halo}>
            <textPath href={"#" + id} textLength={len} lengthAdjust="spacingAndGlyphs">{text}</textPath>
          </text>
        </g>
      ))}
      {labels.map(([text, x, y, w, size, kind], i) => (
        <text key={i} x={x} y={y} fontSize={size} textAnchor="middle" textLength={w} lengthAdjust="spacingAndGlyphs"
          strokeWidth="3" strokeLinejoin="round" className={"[paint-order:stroke] " + kinds[kind]}>
          {text}
        </text>
      ))}
    </svg>
  );
}

function MapPanel() {
  return (
    <section className="relative h-[326px] w-[2200px] overflow-hidden bg-[#dfdfdf]">
      <MapCanvas />
      <div className="absolute left-5 top-5 rounded-lg border-4 border-black/20 bg-clip-padding">
        <div className="flex w-[60px] flex-col overflow-hidden rounded-[4px] bg-white">
          <button aria-label="Zoom in" className="flex h-[60px] items-center justify-center border-b-2 border-[#ccc]">
            <svg width="24" height="26" viewBox="0 0 24 26" className="mt-2.5"><path d="M0 13h24M12 1v24" stroke="#000" strokeWidth="4.500" /></svg>
          </button>
          <button aria-label="Zoom out" className="flex h-[60px] items-center justify-center">
            <svg width="24" height="26" viewBox="0 0 24 26" className="mt-2"><path d="M0 13h24" stroke="#000" strokeWidth="5" /></svg>
          </button>
        </div>
      </div>
    </section>
  );
}

/* ---------- Page ---------- */

const current = ["17 °C", "clear sky", "Feels like 16 °C", "Wind 5 m/s", "Humidity 39 %", "Pressure 1021 hPa"];

const forecast = [
  { day: "Thursday", icon: <ScatteredIcon />, high: 15, low: 6, text: "scattered clouds" },
  { day: "Friday", icon: <BrokenIcon id="cloud-f" />, high: 17, low: 7, text: "overcast clouds" },
  { day: "Saturday", icon: <BrokenIcon id="cloud-s" />, high: 18, low: 9, text: "broken clouds" },
  { day: "Sunday", icon: <RainIcon />, high: 17, low: 9, text: "light rain" },
  { day: "Monday", icon: <NightIcon />, high: 14, low: 9, text: "clear sky" },
];

function Card({ className, children }) {
  return (
    <article className={"w-[440px] rounded-[40px] bg-[#222] px-8 shadow-[0_8px_16px_rgba(0,0,0,0.07)] " + className}>
      {children}
    </article>
  );
}

function Header() {
  return (
    <header className="flex h-[176px] items-center justify-between bg-white pl-9 pr-10 text-[#111] shadow-[0_8px_16px_rgba(0,0,0,0.1)]">
      <h1 className="text-[64px] font-bold leading-none [-webkit-text-stroke:0.5px]">Weather Website</h1>
      <div className="flex items-center">
        <span className="mr-10 text-[#aaa]">Light</span>
        <button aria-label="Toggle theme" className="flex h-14 w-[100px] items-center justify-end rounded-full bg-[#111] pr-1.5">
          <span className="size-11 rounded-full bg-white" />
        </button>
        <span className="ml-5 font-bold">Dark</span>
      </div>
      <form className="flex h-20">
        <input
          placeholder="Search Location"
          className="h-20 w-[413px] rounded-l-[40px] bg-[#f7f7f7] px-[39px] text-[32px] placeholder:text-[#757575]"
        />
        <button type="button" className="h-20 w-[181px] rounded-r-[40px] bg-[#111] text-[32px] text-white">Search</button>
      </form>
    </header>
  );
}

export default function App() {
  return (
    <div className="h-[1668px] w-[3020px] overflow-hidden bg-[#222] font-['Liberation_Sans',Arial,sans-serif] text-[32px] leading-[48px] text-white [-webkit-text-stroke:0.3px]">
      <Header />
      <main className="ml-[348px] flex w-[2200px] flex-col pt-10 [&_svg]:[-webkit-text-stroke:0]">
        <Card className="h-[628px] pt-8">
          <div className="flex h-[72px] items-center">
            <h2 className="text-[48px] font-bold leading-[72px]">Bagarmossen</h2>
            <span className="-mt-1 ml-[34px]"><PinIcon /></span>
          </div>
          <div className="mt-[29px] pb-4"><SunIcon /></div>
          {current.map((line) => <p key={line}>{line}</p>)}
        </Card>
        <section className="mt-10 flex">
          {forecast.map((f) => (
            <Card key={f.day} className="h-[378px] pt-8">
              <h3 className="text-[37.44px] font-bold leading-[56px]">{f.day}</h3>
              <div className="-mt-1.5 pb-5">{f.icon}</div>
              <p>High: {f.high} °C</p>
              <p>Low: {f.low} °C</p>
              <p>{f.text}</p>
            </Card>
          ))}
        </section>
        <div className="mt-20"><MapPanel /></div>
      </main>
    </div>
  );
}
